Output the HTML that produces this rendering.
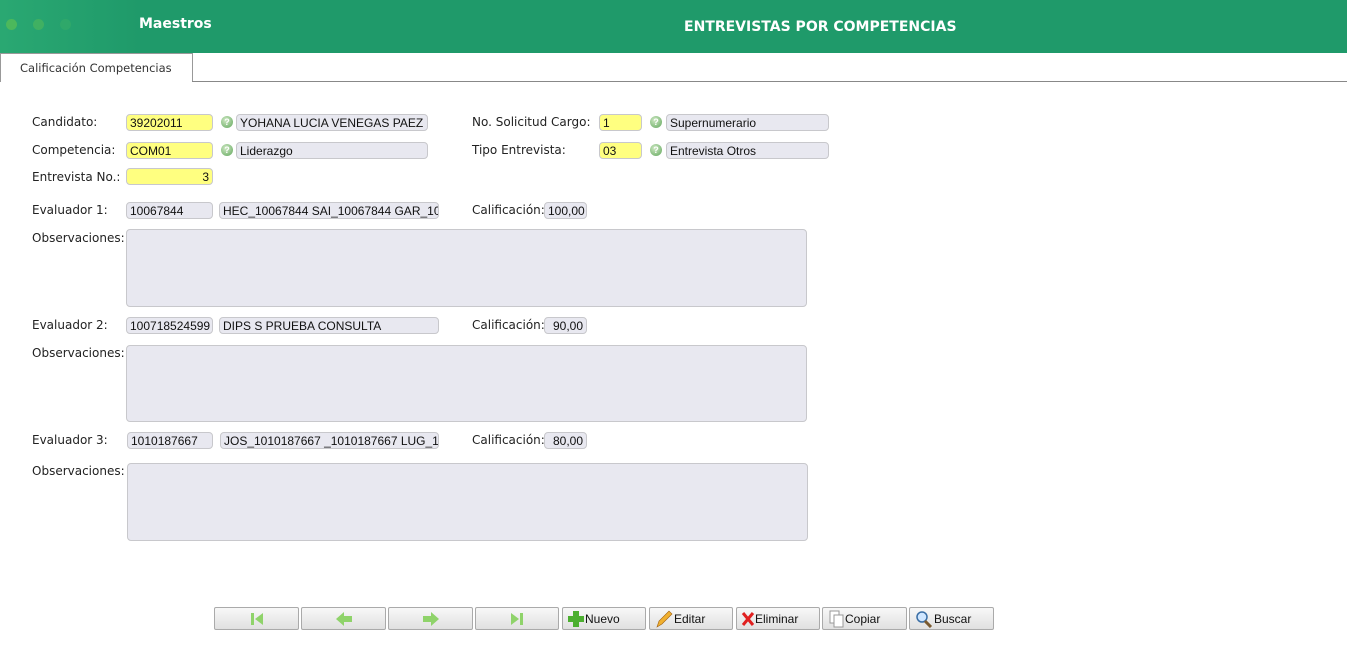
<!DOCTYPE html>
<html><head><meta charset="utf-8"><style>
*{box-sizing:border-box;margin:0;padding:0}
body{width:1347px;height:656px;background:#fff;position:relative;overflow:hidden;font-family:"Liberation Sans",sans-serif;font-size:12px;color:#222}
.hdr{position:absolute;left:0;top:0;width:1347px;height:53px;background:#1f9a6a}
.hdr .glow{position:absolute;left:0;top:0;width:140px;height:53px;background:linear-gradient(90deg,#2aa872,#1f9a6a)}
.dot{position:absolute;top:19px;width:11px;height:11px;border-radius:50%;background:#3ab36a}
.t{position:absolute;color:#fff;font-weight:bold;font-size:14px;font-family:"DejaVu Sans","Liberation Sans",sans-serif}
.tab{position:absolute;left:0;top:53px;width:193px;height:29px;border:1px solid #999;border-bottom:none;background:#fff;color:#333;padding:7px 0 0 19px;font-family:"DejaVu Sans",sans-serif;font-size:11.5px}
.line{position:absolute;left:192px;top:81px;width:1155px;height:1px;background:#888}
.l{position:absolute;color:#222;font-family:"DejaVu Sans",sans-serif;font-size:12px}
.f{position:absolute;height:17px;border:1px solid #c8c8cc;border-radius:4px;background:#e8e8f0;font-size:12px;padding:1px 0 0 3px;white-space:nowrap;overflow:hidden;color:#111}
.y{background:#ffff80}
.r{text-align:right;padding-right:3px}
.q{position:absolute;width:12px;height:12px;border-radius:50%;background:radial-gradient(circle at 40% 35%,#cfe9c4,#5fa55a);color:#fff;font-size:9px;font-weight:bold;text-align:center;line-height:12px}
.ta{position:absolute;border:1px solid #c8c8cc;border-radius:4px;background:#e8e8f0}
.b{position:absolute;top:607px;height:23px;border:1px solid #aaa;border-radius:2px;background:linear-gradient(#f8f8f8,#e0e0e0);font-size:12px;color:#111;display:flex;align-items:center;justify-content:center}
</style></head><body>
<div class="hdr"><div class="glow"></div>
<div class="dot" style="left:6px;background:#4cb85c"></div><div class="dot" style="left:33px;background:#40b062"></div><div class="dot" style="left:60px;background:#2fa86a"></div>
<div class="t" style="left:139px;top:16px">Maestros</div>
<div class="t" style="left:684px;top:19px">ENTREVISTAS POR COMPETENCIAS</div></div>
<div class="tab">Calificación Competencias</div><div class="line"></div>

<div class="l" style="left:32px;top:115px">Candidato:</div>
<div class="f y" style="left:126px;top:114px;width:87px">39202011</div>
<div class="q" style="left:221px;top:116px">?</div>
<div class="f" style="left:236px;top:114px;width:192px">YOHANA LUCIA VENEGAS PAEZ</div>
<div class="l" style="left:472px;top:115px">No. Solicitud Cargo:</div>
<div class="f y" style="left:599px;top:114px;width:43px">1</div>
<div class="q" style="left:650px;top:116px">?</div>
<div class="f" style="left:666px;top:114px;width:163px">Supernumerario</div>

<div class="l" style="left:32px;top:143px">Competencia:</div>
<div class="f y" style="left:126px;top:142px;width:87px">COM01</div>
<div class="q" style="left:221px;top:144px">?</div>
<div class="f" style="left:236px;top:142px;width:192px">Liderazgo</div>
<div class="l" style="left:472px;top:143px">Tipo Entrevista:</div>
<div class="f y" style="left:599px;top:142px;width:43px">03</div>
<div class="q" style="left:650px;top:144px">?</div>
<div class="f" style="left:666px;top:142px;width:163px">Entrevista Otros</div>

<div class="l" style="left:32px;top:170px">Entrevista No.:</div>
<div class="f y r" style="left:126px;top:168px;width:87px">3</div>

<div class="l" style="left:32px;top:203px">Evaluador 1:</div>
<div class="f" style="left:126px;top:202px;width:87px">10067844</div>
<div class="f" style="left:219px;top:202px;width:220px">HEC_10067844 SAI_10067844 GAR_10</div>
<div class="l" style="left:472px;top:203px">Calificación:</div>
<div class="f r" style="left:544px;top:202px;width:43px">100,00</div>
<div class="l" style="left:32px;top:231px">Observaciones:</div>
<div class="ta" style="left:126px;top:229px;width:681px;height:78px"></div>

<div class="l" style="left:32px;top:318px">Evaluador 2:</div>
<div class="f" style="left:126px;top:317px;width:87px">100718524599</div>
<div class="f" style="left:219px;top:317px;width:220px">DIPS S PRUEBA CONSULTA</div>
<div class="l" style="left:472px;top:318px">Calificación:</div>
<div class="f r" style="left:544px;top:317px;width:43px">90,00</div>
<div class="l" style="left:32px;top:346px">Observaciones:</div>
<div class="ta" style="left:126px;top:345px;width:681px;height:77px"></div>

<div class="l" style="left:32px;top:433px">Evaluador 3:</div>
<div class="f" style="left:127px;top:432px;width:86px">1010187667</div>
<div class="f" style="left:220px;top:432px;width:219px">JOS_1010187667 _1010187667 LUG_10</div>
<div class="l" style="left:472px;top:433px">Calificación:</div>
<div class="f r" style="left:544px;top:432px;width:43px">80,00</div>
<div class="l" style="left:32px;top:464px">Observaciones:</div>
<div class="ta" style="left:127px;top:463px;width:681px;height:78px"></div>

<div class="b" style="left:214px;width:85px"><svg width="16" height="16"><rect x="2" y="2" width="3" height="12" fill="#8fd36a"/><path d="M14 2 L6 8 L14 14Z" fill="#8fd36a"/></svg></div>
<div class="b" style="left:301px;width:85px"><svg width="18" height="16"><path d="M1 8 L9 1 L9 5 L17 5 L17 11 L9 11 L9 15Z" fill="#8fd36a"/></svg></div>
<div class="b" style="left:388px;width:85px"><svg width="18" height="16"><path d="M17 8 L9 1 L9 5 L1 5 L1 11 L9 11 L9 15Z" fill="#8fd36a"/></svg></div>
<div class="b" style="left:475px;width:84px"><svg width="16" height="16"><path d="M2 2 L10 8 L2 14Z" fill="#8fd36a"/><rect x="11" y="2" width="3" height="12" fill="#8fd36a"/></svg></div>
<div class="b" style="left:562px;width:84px;justify-content:flex-start;padding-left:4px"><svg width="18" height="18"><path d="M6 1h6v5h5v6h-5v5H6v-5H1V6h5z" fill="#4caf30"/></svg>Nuevo</div>
<div class="b" style="left:649px;width:84px;justify-content:flex-start;padding-left:4px"><svg width="20" height="18"><path d="M3 17 L5 11 L15 1 L18 4 L8 14Z" fill="#f0b030" stroke="#a06010" stroke-width=".6"/></svg>Editar</div>
<div class="b" style="left:736px;width:84px;justify-content:flex-start;padding-left:4px"><svg width="14" height="16"><path d="M2 2 L12 14 M12 2 L2 14" stroke="#e02020" stroke-width="3"/></svg>Eliminar</div>
<div class="b" style="left:822px;width:85px;justify-content:flex-start;padding-left:6px"><svg width="16" height="18"><rect x="1" y="1" width="9" height="12" fill="#fff" stroke="#999"/><rect x="5" y="5" width="9" height="12" fill="#fff" stroke="#999"/></svg>Copiar</div>
<div class="b" style="left:909px;width:85px;justify-content:flex-start;padding-left:4px"><svg width="20" height="18"><circle cx="8" cy="7" r="5" fill="#cfe6ff" stroke="#3a6ea5" stroke-width="1.5"/><path d="M11 11 L17 17" stroke="#7a5a30" stroke-width="3"/></svg>Buscar</div>
</body></html>
